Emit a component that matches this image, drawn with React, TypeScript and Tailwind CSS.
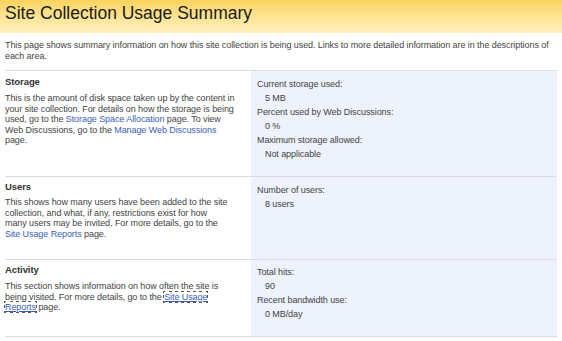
import React from "react";

const linkCls = "text-[#3a5fb8]";

function Item({ label, value }: { label: string; value: string }) {
  return (
    <div>
      <div className="h-[14px] leading-[14px]">{label}</div>
      <div className="h-[14px] leading-[14px] pl-[8px]">{value}</div>
    </div>
  );
}

export default function App() {
  return (
    <div
      className="w-[562px] h-[341px] bg-white text-[#444] overflow-hidden text-[9px] tracking-[-0.08px]"
      style={{ fontFamily: "'Liberation Sans', Arial, sans-serif" }}
    >
      <div className="h-[33px] bg-gradient-to-b from-[#fbd45c] to-[#fff1bf] pl-[5px] pt-[2px]">
        <div className="text-[17.5px] leading-[22px] tracking-normal text-[#1a1a1a]">Site Collection Usage Summary</div>
      </div>
      <div className="px-[5px] pt-[7px] leading-[11px] h-[37px]">
        This page shows summary information on how this site collection is being used. Links to more detailed information are in the descriptions of each area.
      </div>
      <div className="mx-[5px] border-t border-[#dcdcdc]">
        <div className="flex h-[106px] border-b border-[#dcdcdc]">
          <div className="w-[246px] pt-[5px] pr-[2px] leading-[10.5px]">
            <div className="font-bold text-[#333] leading-[12px] mb-[5px] text-[9.5px]">Storage</div>
            <div>
              This is the amount of disk space taken up by the content in<br />
              your site collection. For details on how the storage is being<br />
              used, go to the <span className={linkCls}>Storage Space Allocation</span> page. To view<br />
              Web Discussions, go to the <span className={linkCls}>Manage Web Discussions</span><br />
              page.
            </div>
          </div>
          <div className="flex-1 bg-[#edf2fd] pl-[6px] pt-[6px]">
            <Item label="Current storage used:" value="5 MB" />
            <Item label="Percent used by Web Discussions:" value="0 %" />
            <Item label="Maximum storage allowed:" value="Not applicable" />
          </div>
        </div>
        <div className="flex h-[83px] border-b border-[#dcdcdc]">
          <div className="w-[246px] pt-[4px] pr-[2px] leading-[10.5px]">
            <div className="font-bold text-[#333] leading-[12px] mb-[4px] text-[9.5px]">Users</div>
            <div>
              This shows how many users have been added to the site<br />
              collection, and what, if any, restrictions exist for how<br />
              many users may be invited. For more details, go to the<br />
              <span className={linkCls}>Site Usage Reports</span> page.
            </div>
          </div>
          <div className="flex-1 bg-[#edf2fd] pl-[6px] pt-[6px]">
            <Item label="Number of users:" value="8 users" />
          </div>
        </div>
        <div className="flex h-[77px] border-b border-[#dcdcdc]">
          <div className="w-[246px] pt-[4px] pr-[2px] leading-[10.5px]">
            <div className="font-bold text-[#333] leading-[12px] mb-[5px] text-[9.5px]">Activity</div>
            <div>
              This section shows information on how often the site is<br />
              being visited. For more details, go to the{" "}
              <span className={`${linkCls} underline outline-1 outline-dotted outline-[#555]`}>
                Site Usage<br />
                Reports
              </span>{" "}
              page.
            </div>
          </div>
          <div className="flex-1 bg-[#edf2fd] pl-[6px] pt-[5px]">
            <Item label="Total hits:" value="90" />
            <Item label="Recent bandwidth use:" value="0 MB/day" />
          </div>
        </div>
      </div>
    </div>
  );
}
